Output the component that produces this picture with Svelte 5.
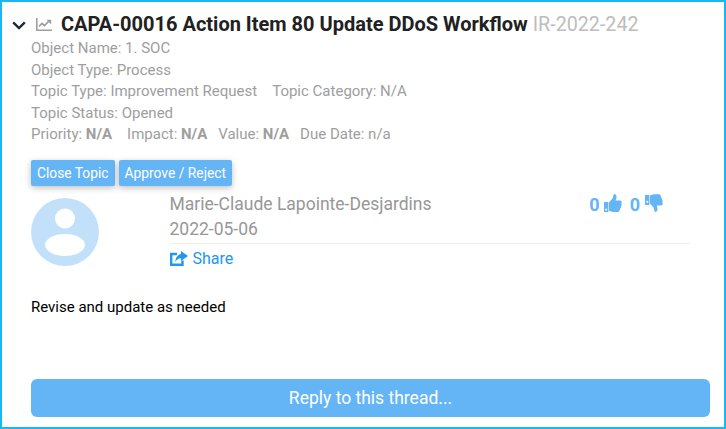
<script>
  const meta = [
    [{ text: "Object Name: 1. SOC" }],
    [{ text: "Object Type: Process" }],
    [{ text: "Topic Type: Improvement Request" }, { text: "Topic Category: N/A" }],
    [{ text: "Topic Status: Opened" }],
  ];
  const scores = [
    { label: "Priority:", value: "N/A" },
    { label: "Impact:", value: "N/A" },
    { label: "Value:", value: "N/A" },
  ];
</script>

<div class="panel">
  <header class="title-row">
    <svg class="chevron" viewBox="0 0 14 9" width="14" height="9">
      <path d="M1.2 1.4 L7 7 L12.8 1.4" fill="none" stroke="#1f2a33" stroke-width="2.4" />
    </svg>
    <svg class="chart" viewBox="0 0 16 13" width="16" height="13">
      <path d="M0.8 0 V12.2 H16" fill="none" stroke="#9e9e9e" stroke-width="1.6" />
      <path d="M3 8.5 L6 5.5 L8.5 7.5 L13 3" fill="none" stroke="#9e9e9e" stroke-width="1.7" />
      <path d="M10.5 1.8 H15.2 V6.5 Z" fill="#9e9e9e" />
    </svg>
    <h1>CAPA-00016 Action Item 80 Update DDoS Workflow <span>IR-2022-242</span></h1>
  </header>

  <div class="meta">
    {#each meta as row}
      <div class="meta-row">
        {#each row as item}
          <span>{item.text}</span>
        {/each}
      </div>
    {/each}
    <div class="meta-row scores">
      {#each scores as s}
        <span>{s.label} <b>{s.value}</b></span>
      {/each}
      <span>Due Date: n/a</span>
    </div>
  </div>

  <div class="actions">
    <button>Close Topic</button>
    <button>Approve / Reject</button>
  </div>

  <section class="post">
    <svg class="avatar" viewBox="0 0 68 68" width="68" height="68">
      <circle cx="34" cy="34" r="34" fill="#c3e0fb" />
      <circle cx="34" cy="20.5" r="10" fill="#fff" />
      <ellipse cx="34" cy="47" rx="20" ry="11" fill="#fff" />
    </svg>
    <div class="post-main">
      <div class="post-head">
        <div class="who">
          <div>Marie-Claude Lapointe-Desjardins</div>
          <div>2022-05-06</div>
        </div>
        <div class="votes">
          <span>0</span>
          <svg class="up" viewBox="0 0 18 18" width="18" height="18">
            <path d="M0 8 H4.4 V18 H0 Z M2.2 14.4 a1 1 0 1 0 0.01 0 Z" fill="#64b5f6" fill-rule="evenodd" />
            <path d="M5 8.5 L8.5 4.5 C9.2 3 9 1.5 10 0 C12.4 0 13 2.5 12.2 5 L11.6 6.6 H16.2 C17.8 6.8 18.2 8.6 17.3 9.6 C18 10.6 17.8 11.8 16.8 12.4 C17.2 13.4 16.8 14.4 15.9 14.8 C16.1 16.4 15.2 17.8 14 18 H9 C7.5 18 6.3 17 5 16.8 Z" fill="#64b5f6" />
          </svg>
          <span class="second">0</span>
          <svg viewBox="0 0 18 18" width="18" height="18">
            <path d="M0 1 H4.4 V11 H0 Z M2.2 6.8 a1 1 0 1 0 0.01 0 Z" fill="#64b5f6" fill-rule="evenodd" />
            <path d="M5 1.4 C6.3 1.2 7.5 0.2 9 0.2 H14 C15.2 0.4 16.1 1.6 15.9 3.2 C16.8 3.6 17.2 4.6 16.8 5.6 C17.8 6.2 18 7.4 17.3 8.4 C18.2 9.4 17.8 11.2 16.2 11.4 H11.6 L12.2 13 C13 15.5 12.4 18 10 18 C9 16.5 9.2 15 8.5 13.5 L5 9.5 Z" fill="#64b5f6" />
          </svg>
        </div>
      </div>
      <a class="share" href="#share">
        <svg viewBox="0 0 18 15" width="18" height="15">
          <path d="M7 3 H1.2 V13.8 H12.5 V9.5" fill="none" stroke="#2196f3" stroke-width="2.4" />
          <path d="M11 0 L18 5 L11 10 V7.3 C8.5 7.3 6.6 8.4 5.4 11 C5.4 6.8 7.6 3.6 11 3 Z" fill="#2196f3" />
        </svg>
        Share
      </a>
    </div>
  </section>

  <p class="body">Revise and update as needed</p>

  <button class="reply">Reply to this thread...</button>
</div>

<style>
  :global(body) {
    margin: 0;
    background: #fff;
  }
  .panel {
    box-sizing: border-box;
    width: 726px;
    height: 429px;
    border: 2px solid #1ab8f3;
    padding: 11px 14px 10px 29px;
    display: flex;
    flex-direction: column;
    font-family: Roboto, sans-serif;
    font-size: 15px;
    color: #9e9e9e;
  }
  .title-row {
    display: flex;
    align-items: center;
    height: 23px;
    margin-left: -19px;
  }
  .chevron {
    margin: 1px 0 0 0;
  }
  .chart {
    margin: 0 0 0 10px;
  }
  h1 {
    margin: 0 0 0 9px;
    font-size: 20px;
    line-height: 23px;
    font-weight: 700;
    color: #212121;
    white-space: nowrap;
  }
  h1 span {
    font-size: 19.7px;
    font-weight: 400;
    color: #bdbdbd;
  }
  .meta {
    margin-top: 2px;
  }
  .meta-row {
    display: flex;
    gap: 15px;
    height: 21.6px;
    line-height: 21.6px;
    white-space: nowrap;
  }
  .scores {
    gap: 11px;
  }
  .scores span:first-child {
    margin-right: 4px;
  }
  .scores b {
    font-weight: 700;
  }
  .actions {
    display: flex;
    gap: 4px;
    margin-top: 14px;
  }
  button {
    border: 0;
    font-family: inherit;
    color: #fff;
    background: #64b5f6;
  }
  .actions button {
    height: 26px;
    padding: 0 6px;
    font-size: 13.8px;
    border-radius: 2px;
    box-shadow: 0 2px 6px rgba(0, 0, 0, 0.25);
  }
  .post {
    display: flex;
    margin-top: 12px;
  }
  .post-main {
    flex: 1;
    margin: -6px 19px 0 70.5px;
  }
  .post-head {
    display: flex;
    justify-content: space-between;
    border-bottom: 1px solid #eeeeee;
    height: 51px;
  }
  .who {
    font-size: 17.5px;
    line-height: 25px;
    color: #979797;
  }
  .votes {
    display: flex;
    align-items: flex-start;
    padding-right: 28px;
    font-size: 18px;
    line-height: 25px;
    font-weight: 700;
    color: #64b5f6;
  }
  .votes svg {
    margin: 2px 0 0 5px;
  }
  .votes .up {
    margin-left: 4px;
  }
  .votes .second {
    margin-left: 8px;
  }
  .share {
    display: flex;
    align-items: center;
    gap: 5px;
    margin-top: 6px;
    height: 18px;
    font-size: 16px;
    color: #2196f3;
    text-decoration: none;
  }
  .body {
    margin: 29px 0 0;
    color: #000;
    line-height: 20px;
  }
  .reply {
    margin-top: auto;
    height: 38px;
    width: 679px;
    border-radius: 6px;
    font-size: 17.5px;
  }
</style>
